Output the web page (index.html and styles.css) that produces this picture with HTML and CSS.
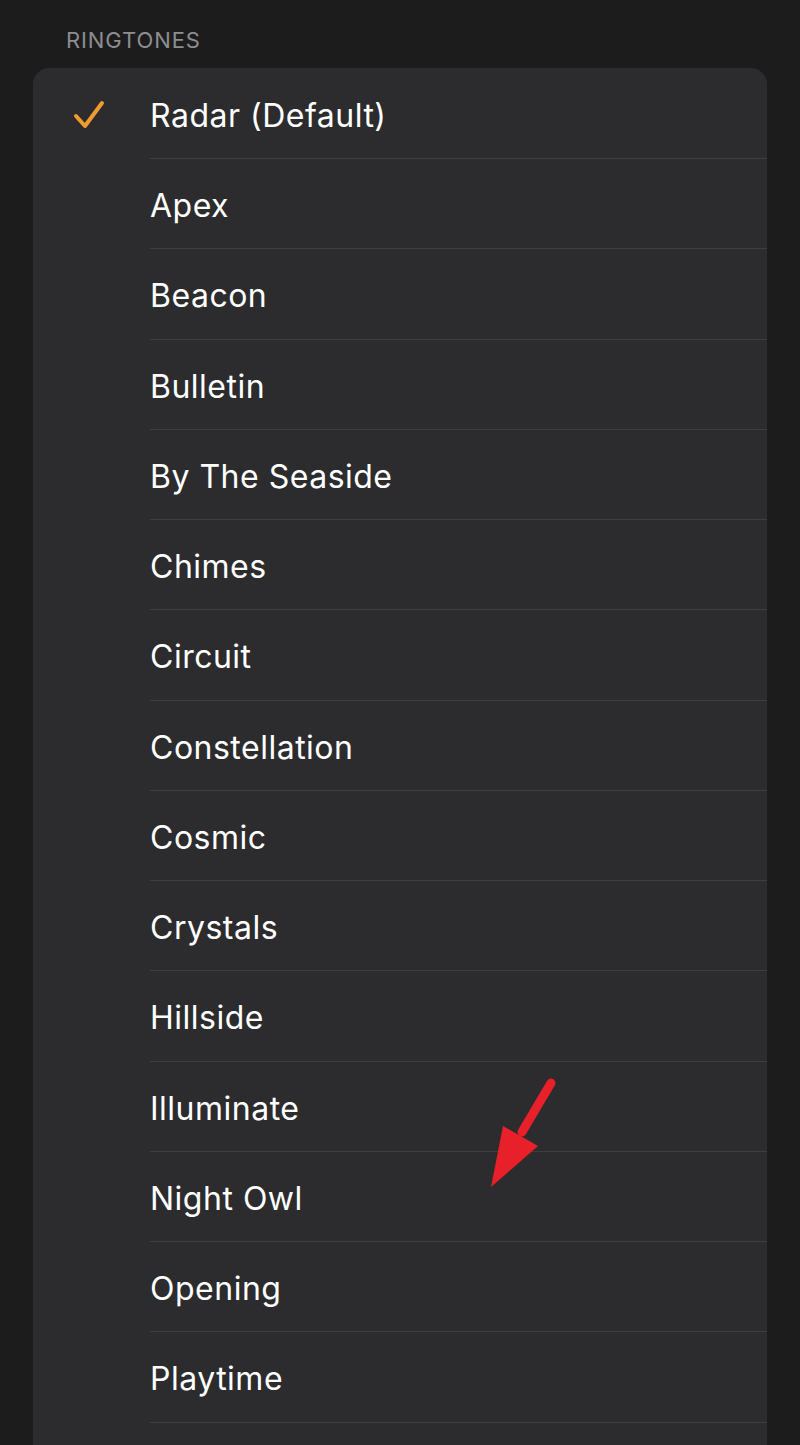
FILE: index.html
```html
<!DOCTYPE html>
<html>
<head>
<meta charset="utf-8">
<link rel="stylesheet" href="styles.css">
</head>
<body>
<div class="page">
  <div class="section-title">RINGTONES</div>
  <div class="card">
    <div class="row">
      <div class="check">
        <svg width="34" height="30" viewBox="0 0 34 30"><path d="M3 16 L12 26 L29 3" fill="none" stroke="#f19a2f" stroke-width="4" stroke-linecap="round" stroke-linejoin="round"/></svg>
      </div>
      <div class="label">Radar (Default)</div>
    </div>
    <div class="row"><div class="check"></div><div class="label">Apex</div></div>
    <div class="row"><div class="check"></div><div class="label">Beacon</div></div>
    <div class="row"><div class="check"></div><div class="label">Bulletin</div></div>
    <div class="row"><div class="check"></div><div class="label">By The Seaside</div></div>
    <div class="row"><div class="check"></div><div class="label">Chimes</div></div>
    <div class="row"><div class="check"></div><div class="label">Circuit</div></div>
    <div class="row"><div class="check"></div><div class="label">Constellation</div></div>
    <div class="row"><div class="check"></div><div class="label">Cosmic</div></div>
    <div class="row"><div class="check"></div><div class="label">Crystals</div></div>
    <div class="row"><div class="check"></div><div class="label">Hillside</div></div>
    <div class="row"><div class="check"></div><div class="label">Illuminate</div></div>
    <div class="row"><div class="check"></div><div class="label">Night Owl</div></div>
    <div class="row"><div class="check"></div><div class="label">Opening</div></div>
    <div class="row"><div class="check"></div><div class="label">Playtime</div></div>
    <div class="spacer"></div>
  </div>
  <svg class="arrow" width="800" height="1445" viewBox="0 0 800 1445">
    <line x1="551" y1="1083" x2="522" y2="1132" stroke="#e8202a" stroke-width="9" stroke-linecap="round"/>
    <polygon points="503,1126 538,1146 491,1187" fill="#e8202a"/>
  </svg>
</div>
</body>
</html>
```
FILE: styles.css
```css
html, body {
  margin: 0;
  padding: 0;
  background: #1c1c1c;
}
.page {
  position: relative;
  width: 800px;
  height: 1445px;
  overflow: hidden;
  font-family: Inter, "Noto Sans", sans-serif;
}
.section-title {
  padding: 27px 0 0 66px;
  height: 68px;
  box-sizing: border-box;
  font-size: 22px;
  line-height: 26px;
  color: #8d8d92;
  letter-spacing: 0.9px;
}
.card {
  margin: 0 33px;
  padding-top: 0.75px;
  background: #2c2c2e;
  border-radius: 16px 16px 0 0;
}
.row {
  display: flex;
  align-items: stretch;
  height: 90.25px;
}
.check {
  width: 117px;
  flex: none;
  display: flex;
  align-items: center;
  padding-left: 40px;
  padding-top: 2px;
  box-sizing: border-box;
}
.label {
  flex: 1;
  display: flex;
  align-items: center;
  color: #ffffff;
  font-size: 32px;
  letter-spacing: 0.5px;
  border-bottom: 1px solid #3e3e41;
  padding-left: 0;
  padding-top: 4px;
}
.spacer {
  height: 40px;
}
.arrow {
  position: absolute;
  left: 0;
  top: 0;
  pointer-events: none;
}
```
